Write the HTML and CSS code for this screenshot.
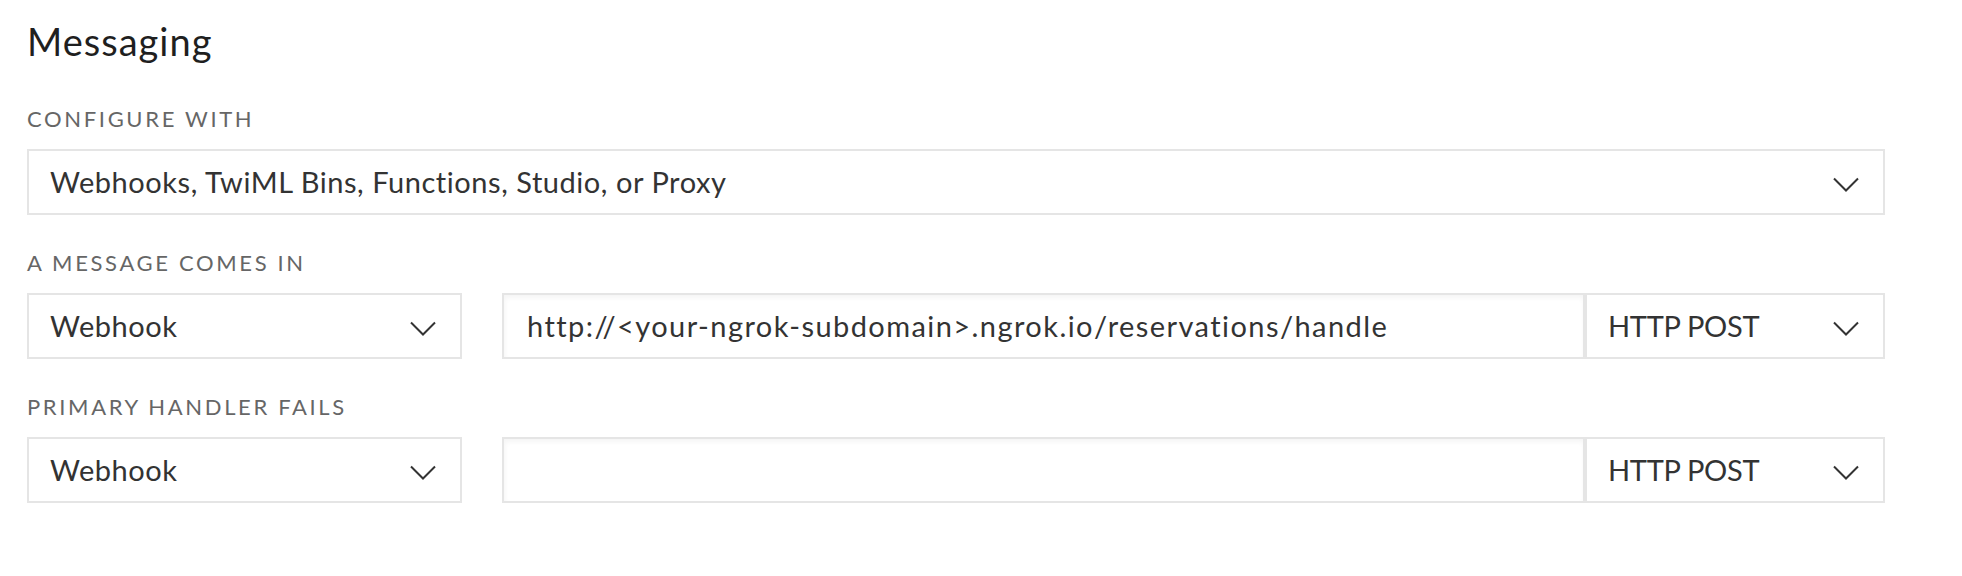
FILE: index.html
```html
<!DOCTYPE html>
<html lang="en">
<head>
<meta charset="utf-8">
<title>Messaging</title>
<link rel="stylesheet" href="styles.css">
</head>
<body>
<div class="panel">
  <h2 class="title">Messaging</h2>
  <div class="fields">
    <div class="field">
      <div class="label">CONFIGURE WITH</div>
      <div class="select select--full">
        <span class="select__text">Webhooks, TwiML Bins, Functions, Studio, or Proxy</span>
        <svg class="chevron" width="26" height="15" viewBox="0 0 26 15"><polyline points="1,1.5 13,13.5 25,1.5" /></svg>
      </div>
    </div>
    <div class="field">
      <div class="label">A MESSAGE COMES IN</div>
      <div class="row">
        <div class="select select--type">
          <span class="select__text">Webhook</span>
          <svg class="chevron" width="26" height="15" viewBox="0 0 26 15"><polyline points="1,1.5 13,13.5 25,1.5" /></svg>
        </div>
        <div class="combo">
          <div class="input">http://&lt;your-ngrok-subdomain&gt;.ngrok.io/reservations/handle</div>
          <div class="select select--method">
            <span class="select__text">HTTP POST</span>
            <svg class="chevron" width="26" height="15" viewBox="0 0 26 15"><polyline points="1,1.5 13,13.5 25,1.5" /></svg>
          </div>
        </div>
      </div>
    </div>
    <div class="field">
      <div class="label">PRIMARY HANDLER FAILS</div>
      <div class="row">
        <div class="select select--type">
          <span class="select__text">Webhook</span>
          <svg class="chevron" width="26" height="15" viewBox="0 0 26 15"><polyline points="1,1.5 13,13.5 25,1.5" /></svg>
        </div>
        <div class="combo">
          <div class="input"></div>
          <div class="select select--method">
            <span class="select__text">HTTP POST</span>
            <svg class="chevron" width="26" height="15" viewBox="0 0 26 15"><polyline points="1,1.5 13,13.5 25,1.5" /></svg>
          </div>
        </div>
      </div>
    </div>
  </div>
</div>
</body>
</html>
```
FILE: styles.css
```css
* { box-sizing: border-box; }
html, body {
  margin: 0;
  padding: 0;
  background: #ffffff;
}
body {
  font-family: Lato, "Open Sans", sans-serif;
  color: #282828;
}
.panel {
  padding: 19px 0 0 27px;
  width: 1885px;
}
.title {
  margin: 0 0 44px 0;
  font-size: 38px;
  line-height: 44px;
  letter-spacing: 1px;
  font-weight: 400;
  color: #1f1f1f;
}
.fields {
  display: flex;
  flex-direction: column;
  gap: 36px;
}
.field {
  display: flex;
  flex-direction: column;
}
.label {
  font-size: 22px;
  line-height: 24px;
  letter-spacing: 2.65px;
  color: #666666;
  margin-bottom: 18px;
}
.row {
  display: flex;
  gap: 40px;
}
.select {
  height: 66px;
  border: 2px solid #e5e5e5;
  background: #ffffff;
  display: flex;
  align-items: center;
  justify-content: space-between;
  padding: 0 24px 1px 21px;
  font-size: 29px;
  letter-spacing: 0.55px;
  color: #333333;
}
.select--full { width: 1858px; }
.select--type { width: 435px; }
.select--method {
  width: 300px;
  letter-spacing: -0.3px;
}
.chevron {
  display: block;
  margin-top: 6px;
  fill: none;
  stroke: #333333;
  stroke-width: 2;
}
.combo {
  display: flex;
}
.input {
  width: 1083px;
  height: 66px;
  border: 2px solid #e5e5e5;
  box-shadow: inset 1px 3px 5px rgba(0, 0, 0, 0.045);
  display: flex;
  align-items: center;
  padding: 0 18px 1px 23px;
  font-size: 29px;
  letter-spacing: 1.43px;
  color: #333333;
}
```
